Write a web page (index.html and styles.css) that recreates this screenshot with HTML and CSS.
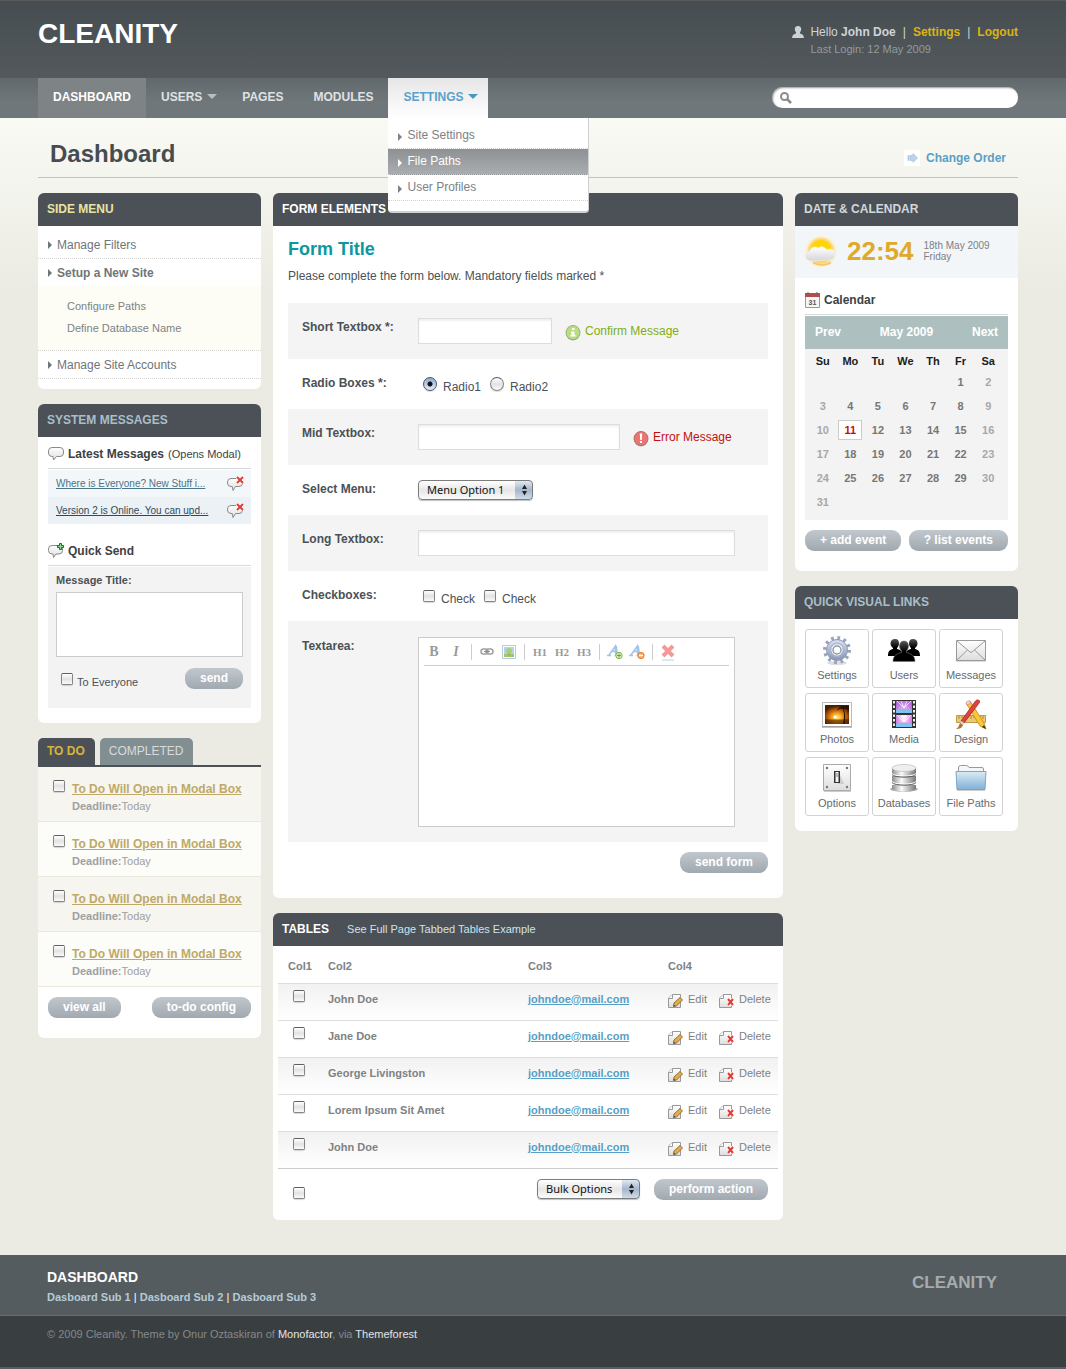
FILE: index.html
```html
<!DOCTYPE html>
<html lang="en">
<head>
<meta charset="utf-8">
<title>Cleanity - Dashboard</title>
<meta name="viewport" content="width=device-width, initial-scale=1">
<link rel="stylesheet" href="styles.css">
</head>
<body>

<svg class="sprite" width="0" height="0" aria-hidden="true">
  <defs>
    <linearGradient id="g-paper" x1="0" y1="0" x2="0" y2="1"><stop offset="0" stop-color="#fff"/><stop offset="1" stop-color="#ddd"/></linearGradient>
    <linearGradient id="g-folder" x1="0" y1="0" x2="0" y2="1"><stop offset="0" stop-color="#dcebf5"/><stop offset="1" stop-color="#7fb0d6"/></linearGradient>
    <linearGradient id="g-gear" x1="0" y1="0" x2="0" y2="1"><stop offset="0" stop-color="#d3daea"/><stop offset="1" stop-color="#8f9cba"/></linearGradient>
    <linearGradient id="g-metal" x1="0" y1="0" x2="1" y2="0"><stop offset="0" stop-color="#8d8d8d"/><stop offset=".4" stop-color="#fafafa"/><stop offset="1" stop-color="#777"/></linearGradient>
    <linearGradient id="g-people" x1="0" y1="0" x2="0" y2="1"><stop offset="0" stop-color="#555"/><stop offset=".5" stop-color="#000"/></linearGradient>
    <linearGradient id="g-cloud" x1="0" y1="0" x2="0" y2="1"><stop offset="0" stop-color="#fff"/><stop offset="1" stop-color="#d6d6da"/></linearGradient>
    <radialGradient id="g-sunset" cx=".5" cy=".65" r=".6"><stop offset="0" stop-color="#fff3a0"/><stop offset=".3" stop-color="#ffae22"/><stop offset=".75" stop-color="#a34c05"/><stop offset="1" stop-color="#4a2000"/></radialGradient>
    <radialGradient id="g-sun"><stop offset="0" stop-color="#ffe000"/><stop offset=".7" stop-color="#fcd63c"/><stop offset="1" stop-color="#f8d98a"/></radialGradient>
    <radialGradient id="g-frame" cx=".5" cy=".6" r=".7"><stop offset="0" stop-color="#fff"/><stop offset=".35" stop-color="#f7b6ee"/><stop offset="1" stop-color="#a660e0"/></radialGradient>
  </defs>
  <symbol id="i-bubble" viewBox="0 0 16 16">
    <path d="M4 1.500h8q3.500 0 3.500 3.500v2q0 3.500-3.500 3.500H8.500L5.500 14l-.5-3.500H4Q.5 10.500.5 7V5Q.5 1.500 4 1.500z" fill="url(#g-paper)" stroke="#8a8a8a"/>
  </symbol>
  <symbol id="i-bubble-delete" viewBox="0 0 17 17">
    <path d="M4 3.500h8q3.500 0 3.500 3.500v1q0 3.500-3.500 3.500H8.500L6 15.500l-.8-4H4Q.5 11.500.5 8V7Q.5 3.500 4 3.500z" fill="url(#g-paper)" stroke="#8a8a8a"/>
    <path d="M10 2l6 6M16 2l-6 6" stroke="#fff" stroke-width="3.500"/><path d="M10 2l6 6M16 2l-6 6" stroke="#e03d35" stroke-width="2"/>
  </symbol>
  <symbol id="i-bubble-add" viewBox="0 0 16 16">
    <path d="M4 2.500h7q3.500 0 3.500 3.500v1.500q0 3.500-3.500 3.500H8L5.500 14.500 5 11H4Q.5 11 .5 7.500V6q0-3.500 3.500-3.500z" fill="url(#g-paper)" stroke="#8a8a8a"/>
    <path d="M11.500.5h2v2h2v2h-2v2h-2v-2h-2v-2h2z" fill="#7fe08f" stroke="#1d6b30"/>
  </symbol>
  <symbol id="i-edit" viewBox="0 0 16 16">
    <path d="M4.500 1.500h8v13H.5V5z" fill="url(#g-paper)" stroke="#999"/><path d="M.5 5.500h4v-4" fill="#fff" stroke="#999"/>
    <path d="M5.500 13.500l.5-3.500 6-5.500 2.500 2.500-6 6z" fill="#e5ab4a" stroke="#7a5a20" stroke-width=".8"/><path d="M5.500 13.500l.3-2 2 1.800z" fill="#555"/>
  </symbol>
  <symbol id="i-delete" viewBox="0 0 16 16">
    <path d="M4.500 1.500h8v13H.5V5z" fill="url(#g-paper)" stroke="#999"/><path d="M.5 5.500h4v-4" fill="#fff" stroke="#999"/>
    <path d="M9 6l5 6M14 6l-5 6" stroke="#fff" stroke-width="3.500"/><path d="M9 6l5 6M14 6l-5 6" stroke="#e03d35" stroke-width="2"/>
  </symbol>
</svg>

<header class="masthead">
  <div class="wrap masthead-row">
    <a class="logo" href="#">CLEANITY</a>
    <div class="account">
      <svg class="account-icon" width="12" height="12" viewBox="0 0 12 12" aria-hidden="true"><path d="M6 0c2.200 0 3.400 1.400 3.200 3.300-.1 1.500-.7 2.500-1.200 3v1.300C10 8.300 11.700 9 12 12H0c.3-3 2-3.700 4-4.400V6.300c-.5-.5-1.100-1.500-1.200-3C2.600 1.400 3.800 0 6 0z" fill="#ced2d4"/></svg>
      <div>
        <p class="account-line">Hello <b>John Doe</b><span class="bar">|</span><a href="#">Settings</a><span class="bar">|</span><a href="#">Logout</a></p>
        <p class="account-login">Last Login: 12 May 2009</p>
      </div>
    </div>
  </div>
</header>

<div class="navbar">
  <div class="wrap navbar-row">
    <nav>
      <ul class="nav">
        <li><a class="nav-link current" href="#">DASHBOARD</a></li>
        <li><a class="nav-link has-menu" href="#">USERS</a></li>
        <li><a class="nav-link" href="#">PAGES</a></li>
        <li><a class="nav-link" href="#">MODULES</a></li>
        <li class="nav-open">
          <a class="nav-link has-menu open" href="#">SETTINGS</a>
          <ul class="dropdown">
            <li><a href="#">Site Settings</a></li>
            <li><a class="hover" href="#">File Paths</a></li>
            <li><a href="#">User Profiles</a></li>
          </ul>
        </li>
      </ul>
    </nav>
    <form class="search" action="#">
      <svg width="12" height="12" viewBox="0 0 12 12" aria-hidden="true"><circle cx="4.500" cy="4.500" r="3.500" fill="none" stroke="#8b8b8b" stroke-width="2"/><path d="M7 7l4 4" stroke="#8b8b8b" stroke-width="2.500"/></svg>
      <input type="text" aria-label="Search">
    </form>
  </div>
</div>

<main class="wrap">
  <div class="page-title">
    <h1>Dashboard</h1>
    <a class="change-order" href="#">
      <svg width="16" height="16" viewBox="0 0 16 16" aria-hidden="true"><path fill="#fff" d="M0 0h16v16H0z"/><path d="M4 5.500h1v5H4zM6 5.500h3V3.500l4.500 4.500L9 12.500v-2H6z" fill="#bcd3ea" stroke="#9dbbd8" stroke-width=".6"/></svg>
      Change Order
    </a>
  </div>

  <div class="columns">
    <div class="column">
      <section class="panel">
        <h2 class="panel-head cream">SIDE MENU</h2>
        <ul class="side-menu">
          <li><a class="side-link" href="#">Manage Filters</a></li>
          <li>
            <a class="side-link active" href="#">Setup a New Site</a>
            <ul class="side-sub">
              <li><a href="#">Configure Paths</a></li>
              <li><a href="#">Define Database Name</a></li>
            </ul>
          </li>
          <li><a class="side-link" href="#">Manage Site Accounts</a></li>
        </ul>
      </section>

      <section class="panel">
        <h2 class="panel-head blue">SYSTEM MESSAGES</h2>
        <div class="messages">
          <h3 class="section-title"><svg width="16" height="16" aria-hidden="true"><use href="#i-bubble"/></svg>Latest Messages <small>(Opens Modal)</small></h3>
          <ul class="message-list">
            <li><a href="#">Where is Everyone? New Stuff i...</a><button class="icon-button" aria-label="Delete message"><svg width="17" height="17"><use href="#i-bubble-delete"/></svg></button></li>
            <li><a href="#">Version 2 is Online. You can upd...</a><button class="icon-button" aria-label="Delete message"><svg width="17" height="17"><use href="#i-bubble-delete"/></svg></button></li>
          </ul>
          <h3 class="section-title"><svg width="16" height="16" aria-hidden="true"><use href="#i-bubble-add"/></svg>Quick Send</h3>
          <form class="quick-send" action="#">
            <label class="quick-label" for="message">Message Title:</label>
            <textarea id="message"></textarea>
            <div class="quick-foot">
              <label class="everyone"><input type="checkbox"> To Everyone</label>
              <button class="btn" type="button">send</button>
            </div>
          </form>
        </div>
      </section>

      <section class="todo">
        <div class="tabs">
          <button class="tab tab-on">TO DO</button>
          <button class="tab">COMPLETED</button>
        </div>
        <div class="todo-body">
          <ul class="todo-list">
            <li><input type="checkbox" aria-label="Done"><div><a href="#">To Do Will Open in Modal Box</a><p><b>Deadline:</b>Today</p></div></li>
            <li><input type="checkbox" aria-label="Done"><div><a href="#">To Do Will Open in Modal Box</a><p><b>Deadline:</b>Today</p></div></li>
            <li><input type="checkbox" aria-label="Done"><div><a href="#">To Do Will Open in Modal Box</a><p><b>Deadline:</b>Today</p></div></li>
            <li><input type="checkbox" aria-label="Done"><div><a href="#">To Do Will Open in Modal Box</a><p><b>Deadline:</b>Today</p></div></li>
          </ul>
          <div class="todo-actions">
            <button class="btn">view all</button>
            <button class="btn">to-do config</button>
          </div>
        </div>
      </section>
    </div>

    <div class="column">
      <section class="panel">
        <h2 class="panel-head">FORM ELEMENTS</h2>
        <form class="demo-form" action="#">
          <h3>Form Title</h3>
          <p class="intro">Please complete the form below. Mandatory fields marked *</p>
          <div class="field shaded">
            <label class="field-label" for="short">Short Textbox *:</label>
            <div class="field-control">
              <input class="text short" id="short" type="text">
              <span class="note ok">
                <svg width="16" height="16" viewBox="0 0 16 16" aria-hidden="true"><circle cx="8" cy="8.500" r="7" fill="#aaa"/><circle cx="8" cy="7.500" r="7" fill="#bcdc84" stroke="#9ab56c"/><path d="M7 3h2.500v2H7zM6 6.500h3.500V10h1v1.500h-5V10h1V8H6z" fill="#fff"/></svg>
                Confirm Message</span>
            </div>
          </div>
          <div class="field" role="group" aria-labelledby="radio-label">
            <span class="field-label" id="radio-label">Radio Boxes *:</span>
            <div class="field-control">
              <label class="option"><input type="radio" name="radio" checked>Radio1</label>
              <label class="option"><input type="radio" name="radio">Radio2</label>
            </div>
          </div>
          <div class="field shaded">
            <label class="field-label" for="mid">Mid Textbox:</label>
            <div class="field-control">
              <input class="text mid" id="mid" type="text">
              <span class="note error">
                <svg width="16" height="16" viewBox="0 0 16 16" aria-hidden="true"><circle cx="8" cy="8.500" r="7" fill="#aaa"/><circle cx="8" cy="7.500" r="7" fill="#e97672" stroke="#b96c68"/><path d="M6.800 2.500h2.400L8.800 9H7.200zM7 10h2v2H7z" fill="#fff"/></svg>
                Error Message</span>
            </div>
          </div>
          <div class="field">
            <label class="field-label" for="menu">Select Menu:</label>
            <div class="field-control">
              <span class="select menu"><select id="menu"><option>Menu Option 1</option></select><svg width="17" height="20" viewBox="0 0 17 20" aria-hidden="true"><path d="M8.500 4.500L11 9H6zM8.500 15.500L11 11H6z" fill="#222"/></svg></span>
            </div>
          </div>
          <div class="field shaded">
            <label class="field-label" for="long">Long Textbox:</label>
            <div class="field-control"><input class="text long" id="long" type="text"></div>
          </div>
          <div class="field" role="group" aria-labelledby="check-label">
            <span class="field-label" id="check-label">Checkboxes:</span>
            <div class="field-control">
              <label class="option"><input type="checkbox">Check</label>
              <label class="option"><input type="checkbox">Check</label>
            </div>
          </div>
          <div class="field field-editor shaded">
            <label class="field-label" for="rich">Textarea:</label>
            <div class="editor">
              <div class="toolbar">
                <button class="tool tool-bold" type="button">B</button>
                <button class="tool tool-italic" type="button">I</button>
                <span class="tool-sep"></span>
                <button class="tool" type="button" aria-label="Link"><svg width="14" height="8" viewBox="0 0 14 8"><rect x="1" y="1" width="7" height="5" rx="2.500" fill="none" stroke="#a0a0a0" stroke-width="1.500"/><rect x="6" y="1" width="7" height="5" rx="2.500" fill="none" stroke="#a0a0a0" stroke-width="1.500"/><path d="M4 3.500h6" stroke="#888"/></svg></button>
                <button class="tool" type="button" aria-label="Image"><svg width="14" height="14" viewBox="0 0 14 14"><path d="M.5.500h13v13H.5z" fill="#fff" stroke="#b5cbe3"/><path d="M2 2h10v10H2z" fill="#b0d3ee"/><path d="M2 9h10v3H2z" fill="#a5c56c"/><circle cx="7" cy="6" r="3" fill="#a6d07c"/><path d="M6.500 8h1v3h-1z" fill="#b39a60"/></svg></button>
                <span class="tool-sep"></span>
                <button class="tool tool-head" type="button">H1</button>
                <button class="tool tool-head" type="button">H2</button>
                <button class="tool tool-head" type="button">H3</button>
                <span class="tool-sep"></span>
                <button class="tool" type="button" aria-label="Larger text"><svg width="16" height="16" viewBox="0 0 16 16"><path d="M2 11L8.500 2 10 11M4.500 7.500h5M0 11.500h4M7.500 11.500H12" fill="none" stroke="#a3c4ea" stroke-width="1.500"/><path d="M8.500 2l1.200 9" stroke="#a3c4ea" stroke-width="3"/><circle cx="12" cy="11.500" r="3.200" fill="#dcefc8" stroke="#7fb552"/><path d="M12 9.500v4M10 11.500h4" stroke="#67a538"/></svg></button>
                <button class="tool" type="button" aria-label="Smaller text"><svg width="16" height="16" viewBox="0 0 16 16"><path d="M2 11L8.500 2 10 11M4.500 7.500h5M0 11.500h4M7.500 11.500H12" fill="none" stroke="#a3c4ea" stroke-width="1.500"/><path d="M8.500 2l1.200 9" stroke="#a3c4ea" stroke-width="3"/><circle cx="12" cy="11.500" r="3.200" fill="#f7a45e" stroke="#e8863c"/><path d="M10 11.500h4" stroke="#fff" stroke-width="1.500"/></svg></button>
                <span class="tool-sep"></span>
                <button class="tool" type="button" aria-label="Clear"><svg width="14" height="18" viewBox="0 0 14 18"><path d="M2 3l10 10M12 3L2 13" stroke="#f4999a" stroke-width="4"/><path d="M1 17h12" stroke="#b3d0ea"/></svg></button>
              </div>
              <textarea id="rich"></textarea>
            </div>
          </div>
          <div class="form-actions"><button class="btn" type="button">send form</button></div>
        </form>
      </section>

      <section class="panel">
        <h2 class="panel-head">TABLES <a href="#">See Full Page Tabbed Tables Example</a></h2>
        <div class="table-area">
          <table class="people">
            <thead><tr><th class="c1">Col1</th><th class="c2">Col2</th><th class="c3">Col3</th><th class="c4">Col4</th></tr></thead>
            <tbody>
              <tr><td><input type="checkbox" aria-label="Select John Doe"></td><td>John Doe</td><td><a class="mail" href="#">johndoe@mail.com</a></td><td class="acts"><div><a href="#"><svg width="16" height="16"><use href="#i-edit"/></svg>Edit</a><a href="#"><svg width="16" height="16"><use href="#i-delete"/></svg>Delete</a></div></td></tr>
              <tr><td><input type="checkbox" aria-label="Select Jane Doe"></td><td>Jane Doe</td><td><a class="mail" href="#">johndoe@mail.com</a></td><td class="acts"><div><a href="#"><svg width="16" height="16"><use href="#i-edit"/></svg>Edit</a><a href="#"><svg width="16" height="16"><use href="#i-delete"/></svg>Delete</a></div></td></tr>
              <tr><td><input type="checkbox" aria-label="Select George Livingston"></td><td>George Livingston</td><td><a class="mail" href="#">johndoe@mail.com</a></td><td class="acts"><div><a href="#"><svg width="16" height="16"><use href="#i-edit"/></svg>Edit</a><a href="#"><svg width="16" height="16"><use href="#i-delete"/></svg>Delete</a></div></td></tr>
              <tr><td><input type="checkbox" aria-label="Select Lorem Ipsum Sit Amet"></td><td>Lorem Ipsum Sit Amet</td><td><a class="mail" href="#">johndoe@mail.com</a></td><td class="acts"><div><a href="#"><svg width="16" height="16"><use href="#i-edit"/></svg>Edit</a><a href="#"><svg width="16" height="16"><use href="#i-delete"/></svg>Delete</a></div></td></tr>
              <tr><td><input type="checkbox" aria-label="Select John Doe"></td><td>John Doe</td><td><a class="mail" href="#">johndoe@mail.com</a></td><td class="acts"><div><a href="#"><svg width="16" height="16"><use href="#i-edit"/></svg>Edit</a><a href="#"><svg width="16" height="16"><use href="#i-delete"/></svg>Delete</a></div></td></tr>
            </tbody>
          </table>
          <div class="bulk">
            <input type="checkbox" aria-label="Select all">
            <span class="select bulk-select"><select aria-label="Bulk options"><option>Bulk Options</option></select><svg width="17" height="20" viewBox="0 0 17 20" aria-hidden="true"><path d="M8.500 4.500L11 9H6zM8.500 15.500L11 11H6z" fill="#222"/></svg></span>
            <button class="btn">perform action</button>
          </div>
        </div>
      </section>
    </div>

    <div class="column">
      <section class="panel">
        <h2 class="panel-head grey">DATE &amp; CALENDAR</h2>
        <div class="clock">
          <svg width="34" height="34" viewBox="0 0 34 34" aria-hidden="true">
            <circle cx="16" cy="16.500" r="15.500" fill="#fdf0c4"/><circle cx="16" cy="16" r="13" fill="url(#g-sun)" stroke="#f8dc9a"/>
            <path d="M6 14a10 9 0 0 1 20 0z" fill="#ffd400"/>
            <path d="M6 26a5 5 0 0 1-1-10 5 5 0 0 1 8-3 6 6 0 0 1 9 2 5 5 0 0 1 8 4q0 6-5 6z" fill="url(#g-cloud)" stroke="#eee" stroke-width=".7"/>
            <path d="M8 27.500q9 5 18 0" fill="none" stroke="#f3c46a" stroke-width="1.500"/>
          </svg>
          <strong>22:54</strong>
          <p>18th May 2009<br>Friday</p>
        </div>
        <div class="calendar">
          <h3 class="section-title">
            <svg width="15" height="16" viewBox="0 0 15 16" aria-hidden="true"><path d="M.5 1.500h14v14H.5z" fill="#f6f6f6" stroke="#999"/><path d="M0 1h15v4H0z" fill="#b34c4c"/><path d="M3 0v3M12 0v3" stroke="#666"/><text x="7.500" y="13" font-family="Liberation Sans, Arial, sans-serif" font-size="7" font-weight="bold" text-anchor="middle" fill="#555">31</text></svg>Calendar</h3>
          <div class="month"><a href="#">Prev</a><span>May 2009</span><a href="#">Next</a></div>
          <div class="days">
            <table>
              <thead><tr><th>Su</th><th>Mo</th><th>Tu</th><th>We</th><th>Th</th><th>Fr</th><th>Sa</th></tr></thead>
              <tbody>
                <tr><td></td><td></td><td></td><td></td><td></td><td>1</td><td>2</td></tr>
                <tr><td>3</td><td>4</td><td>5</td><td>6</td><td>7</td><td>8</td><td>9</td></tr>
                <tr><td>10</td><td><span class="today">11</span></td><td>12</td><td>13</td><td>14</td><td>15</td><td>16</td></tr>
                <tr><td>17</td><td>18</td><td>19</td><td>20</td><td>21</td><td>22</td><td>23</td></tr>
                <tr><td>24</td><td>25</td><td>26</td><td>27</td><td>28</td><td>29</td><td>30</td></tr>
                <tr><td>31</td><td></td><td></td><td></td><td></td><td></td><td></td></tr>
              </tbody>
            </table>
          </div>
          <div class="calendar-actions"><button class="btn">+ add event</button><button class="btn">? list events</button></div>
        </div>
      </section>

      <section class="panel">
        <h2 class="panel-head blue">QUICK VISUAL LINKS</h2>
        <div class="tiles">
          <a class="tile" href="#"><svg width="32" height="32" viewBox="0 0 32 32" aria-hidden="true"><ellipse cx="16" cy="29" rx="10" ry="2" fill="#ddd"/><circle cx="16" cy="16" r="12" fill="none" stroke="#98a4be" stroke-width="4" stroke-dasharray="2.700 3.583"/><circle cx="16" cy="16" r="8" fill="none" stroke="url(#g-gear)" stroke-width="5"/><circle cx="16" cy="16" r="10.500" fill="none" stroke="#8d99b5"/><circle cx="16" cy="16" r="7" fill="none" stroke="#a9b4cb"/><circle cx="16" cy="16" r="4" fill="#fff" stroke="#8f98ad" stroke-width="1.500"/></svg>Settings</a>
          <a class="tile" href="#"><svg width="32" height="32" viewBox="0 0 32 32" aria-hidden="true"><g fill="url(#g-people)"><path d="M7 5c3 0 4 2 4 4.500S9.800 13 9 14v1c3 1 6 1.500 6 7H0c0-5.500 2-6 5-7v-1c-1-1-2.500-2-2.500-4.500S4 5 7 5zM25 5c-3 0-4 2-4 4.500s1.200 3.500 2 4.500v1c-3 1-6 1.500-6 7h15c0-5.500-2-6-5-7v-1c1-1 2.500-2 2.500-4.500S28 5 25 5z"/></g><path d="M16 7c3 0 4.500 2 4.500 5S19 16 18.500 17v1.500c4 1 8.500 2.500 8.500 9H5c0-6.500 4.500-8 8.500-9V17c-.5-1-2-2-2-5s1.500-5 4.500-5z" fill="url(#g-people)" stroke="#777" stroke-width=".6"/></svg>Users</a>
          <a class="tile" href="#"><svg width="32" height="32" viewBox="0 0 32 32" aria-hidden="true"><path d="M1 27h30v1H1z" fill="#ddd"/><path d="M1.500 6.500h29v20h-29z" fill="url(#g-paper)" stroke="#999"/><path d="M2 26l10.500-10M30 26L19.500 16M2 7l13 11q1 .8 2 0L30 7" fill="none" stroke="#999"/></svg>Messages</a>
          <a class="tile" href="#"><svg width="32" height="32" viewBox="0 0 32 32" aria-hidden="true"><path d="M1.500 4.500h29v24h-29z" fill="#fff" stroke="#bbb"/><path d="M1 29h30" stroke="#888"/><path d="M4 7h24v19H4z" fill="url(#g-sunset)"/><path d="M4 21q8 1 24 0v5H4z" fill="#4a2200" opacity=".6"/><path d="M22 26q2-8 0-15-4-1-6 2 1-4 5-4-3-2-5-1 3-1 6 0h6v5q-2-3-5-2 2 7 1 15z" fill="#2b1300"/><circle cx="14" cy="19" r="1.500" fill="#fff"/></svg>Photos</a>
          <a class="tile" href="#"><svg width="32" height="32" viewBox="0 0 32 32" aria-hidden="true"><path d="M4 2h24v28H4z" fill="#333"/><path d="M8 3h16v12H8zM8 17h16v12H8z" fill="url(#g-frame)"/><path d="M8 12q8-3 16 0v3H8zM8 26q8-3 16 0v3H8z" fill="#7fc2f0"/><path d="M16 10L9 3M16 10l-3-7M16 10l3-7M16 10l7-7M16 24l-7-7M16 24l-3-7M16 24l3-7M16 24l7-7" stroke="#fff" stroke-width=".7"/><path d="M6 3v27M26 3v27" stroke="#eee" stroke-width="2" stroke-dasharray="2.500 2"/></svg>Media</a>
          <a class="tile" href="#"><svg width="32" height="32" viewBox="0 0 32 32" aria-hidden="true"><path d="M1.500 17.500h29v7h-29z" fill="#edc873" stroke="#c39a49"/><path d="M4 18v3M7 18v2M10 18v3M13 18v2M16 18v3M19 18v2M22 18v3M25 18v2M28 18v3" stroke="#a07a30" stroke-width=".8"/><path d="M11 5l4-2 14 22 2 6-6-3z" fill="#fbc638" stroke="#c08a1c" stroke-width=".8"/><path d="M29 27l2 4-4-2z" fill="#333"/><path d="M11 5q1-3 4-2l1 2-4 2z" fill="#f4d9d2" stroke="#c66" stroke-width=".5"/><path d="M23 2q2 0 1.500 2.500L9 25l-3-2L20.500 3q1-1.500 2.500-1z" fill="#e0423c" stroke="#9d2320" stroke-width=".7"/><path d="M6.500 23l3 2-1.500 2-3-2z" fill="#d0d0d0"/><path d="M5 25l3 2q-1 4-7 4 3-2 4-6z" fill="#a5763b"/></svg>Design</a>
          <a class="tile" href="#"><svg width="32" height="32" viewBox="0 0 32 32" aria-hidden="true"><path d="M3 29h27v1H3z" fill="#ccc"/><path d="M2.500 2.500h27v26h-27z" fill="url(#g-paper)" stroke="#aaa"/><g fill="#777"><circle cx="6" cy="6" r="1.200"/><circle cx="26" cy="6" r="1.200"/><circle cx="6" cy="25" r="1.200"/><circle cx="26" cy="25" r="1.200"/></g><path d="M19 13l4 9h-6z" fill="#ccc"/><path d="M13 9h6v12h-6z" fill="#333"/><path d="M14.500 10h3v10h-3z" fill="#f5f5f5"/><path d="M15 11h2v4h-2z" fill="#bbb"/></svg>Options</a>
          <a class="tile" href="#"><svg width="32" height="32" viewBox="0 0 32 32" aria-hidden="true"><ellipse cx="16" cy="27" rx="14" ry="3" fill="#bbb"/><path d="M4 23v4c2 3.500 22 3.500 24 0v-4zM4 14v5c2 3.500 22 3.500 24 0v-5zM4 6v5c2 3.500 22 3.500 24 0V6z" fill="url(#g-metal)"/><path d="M4 20.500c2 3.500 22 3.500 24 0M4 12.500c2 3.500 22 3.500 24 0" fill="none" stroke="#555"/><ellipse cx="16" cy="6" rx="12" ry="3.500" fill="#eee" stroke="#bbb" stroke-width=".7"/></svg>Databases</a>
          <a class="tile" href="#"><svg width="32" height="32" viewBox="0 0 32 32" aria-hidden="true"><path d="M2 28h28v1H2z" fill="#ccc"/><path d="M3.500 11V6q0-2.500 2-2.500h6q1.500 0 2.500 2h13q1.500 0 1.500 1.500v4z" fill="#f4f7f9" stroke="#999"/><path d="M1 9.500h30l-1 18H2z" fill="url(#g-folder)" stroke="#7fa5c4"/></svg>File Paths</a>
        </div>
      </section>
    </div>
  </div>
</main>

<footer class="footer">
  <div class="footer-top">
    <div class="wrap footer-row">
      <div class="footer-nav">
        <h2>DASHBOARD</h2>
        <p class="footer-links"><a href="#">Dasboard Sub 1</a> | <a href="#">Dasboard Sub 2</a> | <a href="#">Dasboard Sub 3</a></p>
      </div>
      <strong class="footer-logo">CLEANITY</strong>
    </div>
  </div>
  <div class="footer-bottom">
    <p class="wrap legal">© 2009 Cleanity. Theme by Onur Oztaskiran of <a href="#">Monofactor</a>, via <a href="#">Themeforest</a></p>
  </div>
</footer>
</body>
</html>
```
FILE: styles.css
```css
* { box-sizing: border-box; }

body {
  margin: 0;
  background: #ebebe3 linear-gradient(#fafaf5, #ebebe3) 0 118px / 100% 170px no-repeat;
  color: #4b5156;
  font: 12px/18px "Liberation Sans", Arial, Helvetica, sans-serif;
}

h1, h2, h3, p, ul { margin: 0; padding: 0; }
ul { list-style: none; }
a { color: inherit; text-decoration: none; }
button, input, select, textarea { font: inherit; margin: 0; }
button { cursor: pointer; }
svg { display: block; flex: none; }
.sprite { position: absolute; }

.wrap { max-width: 990px; margin: 0 auto; padding-right: 10px; }

/* Form controls */
input[type="checkbox"], input[type="radio"] {
  appearance: none;
  flex: none;
  width: 12px;
  height: 12px;
  border: 1px solid #858585;
  border-top-color: #5e5e5e;
  border-radius: 2px;
  background: linear-gradient(#fff, #e2e2e2 50%, #fafafa);
  box-shadow: 0 1px 1px rgba(0, 0, 0, .15);
}
input[type="radio"] { width: 14px; height: 14px; border-radius: 50%; }
input[type="radio"]:checked {
  border-color: #4a5870;
  background: radial-gradient(circle, #111 0 2px, transparent 3px), linear-gradient(#8fa8cc, #e4f0fa);
}
input[type="checkbox"]:checked { background: #7089b0; }

.btn {
  height: 21px;
  padding: 0 15px 1px;
  border: 0;
  border-radius: 9px;
  background: linear-gradient(#c0c7cd, #a1a9b0);
  color: #fff;
  font-weight: bold;
  line-height: 20px;
}

.select { display: inline-grid; height: 20px; }
.select > * { grid-area: 1 / 1; }
.select svg { justify-self: end; pointer-events: none; }
.select select {
  appearance: none;
  width: 100%;
  height: 20px;
  padding: 0 20px 0 8px;
  border: 1px solid #7d7d7d;
  border-radius: 4px;
  background:
    linear-gradient(#dfe9f3, #a5b6c9 50%, #cddcea) right / 17px 100% no-repeat,
    linear-gradient(#fff, #e6e6e6 50%, #fbfbfb);
  box-shadow: 0 1px 1px rgba(0, 0, 0, .25);
  color: #111;
  font: 11px/18px "Noto Sans", "Open Sans", sans-serif;
}
.menu { width: 115px; }
.bulk-select { width: 103px; margin-left: auto; }

/* Header */
.masthead {
  border-top: 1px solid #5a5a5a;
  background: linear-gradient(#464d51, #53595d);
}
.masthead-row { display: flex; justify-content: space-between; height: 77px; }
.logo { padding-top: 17px; color: #fff; font-size: 28px; font-weight: bold; line-height: 32px; }
.account { display: flex; gap: 6px; padding-top: 22px; color: #ced4d9; }
.account-icon { margin-top: 3px; }
.account-line a { color: #d9b316; font-weight: bold; }
.bar { margin: 0 7px; }
.account-login { color: #949a9d; font-size: 11px; line-height: 16px; }

.navbar { background: linear-gradient(#62696c, #6f777a 60%); }
.navbar-row { display: flex; justify-content: space-between; }
.nav { display: flex; }
.nav-link {
  display: flex;
  align-items: center;
  gap: 5px;
  height: 40px;
  padding: 0 15px 3px;
  color: #dfe2e4;
  font-weight: bold;
}
.nav-link.current { background: #7e8386; color: #fff; }
.nav-link.has-menu { padding-right: 10px; }
.nav-link.has-menu::after {
  content: "";
  border: 5px solid transparent;
  border-top-color: #b9bec0;
  border-bottom: 0;
}
.nav-link.open { background: linear-gradient(#e6e6e6, #fff); color: #5aa1ca; }
.nav-link.open::after { border-top-color: #4c96c4; }
.nav-open { position: relative; }
.dropdown {
  position: absolute;
  z-index: 2;
  top: 100%;
  left: 0;
  width: 201px;
  padding: 5px 0 10px;
  border-right: 1px solid #d0d0d0;
  border-bottom: 2px solid #d0d0d0;
  border-radius: 0 0 4px 4px;
  background: #fff;
}
.dropdown a {
  display: flex;
  align-items: center;
  gap: 5px;
  height: 26px;
  padding: 0 10px 2px;
  border-bottom: 1px dotted #d0d0d0;
  color: #7c8285;
}
.dropdown a::before, .side-link::before {
  content: "";
  border: 4px solid transparent;
  border-left-color: currentColor;
  border-right: 0;
}
.dropdown a::before { align-self: flex-end; margin-bottom: 5px; }
.side-link::before { margin-right: 1px; }
.dropdown .hover { background: linear-gradient(#8d9194, #a9adaf); color: #fff; }

.search {
  display: flex;
  align-items: center;
  align-self: flex-start;
  gap: 6px;
  width: 246px;
  height: 21px;
  margin-top: 9px;
  padding: 0 8px;
  border-radius: 10px;
  background: #fff;
  box-shadow: inset 1px 1px 2px rgba(0, 0, 0, .4);
}
.search input { flex: 1; min-width: 0; border: 0; background: none; outline: 0; }

/* Page title */
.page-title {
  display: flex;
  justify-content: space-between;
  align-items: center;
  height: 60px;
  margin-bottom: 15px;
  padding: 12px 12px 0;
  border-bottom: 1px solid #c2c2be;
}
h1 { color: #464c50; font-size: 24px; line-height: 30px; }
.change-order { display: flex; align-items: center; gap: 6px; padding-top: 9px; color: #5a9fc5; font-weight: bold; }

/* Columns and panels */
.columns {
  display: grid;
  grid-template-columns: 223px minmax(0, 1fr) 223px;
  align-items: start;
  gap: 12px;
  padding-bottom: 35px;
}
.column { display: grid; gap: 15px; }
.panel { overflow: hidden; border-radius: 6px; background: #fff; }
.panel-head {
  display: flex;
  align-items: center;
  height: 33px;
  padding: 0 9px 1px;
  background: #4b5157;
  color: #fff;
  font-size: 12px;
}
.panel-head a { margin-left: 18px; color: #cfe2ea; font-size: 11px; font-weight: normal; }
.cream { color: #e9e3a2; }
.blue { color: #a9bec8; }
.grey { color: #d3d8db; }

.section-title {
  display: flex;
  align-items: center;
  gap: 4px;
  height: 29px;
  margin-bottom: 1px;
  border-bottom: 1px solid #d5dada;
  color: #3c4144;
  font-size: 12px;
}
.section-title small { font-size: 11px; font-weight: normal; }

/* Side menu */
.side-menu { padding: 5px 0 10px; }
.side-menu > li { border-bottom: 1px dotted #d5d5d5; }
.side-link { display: flex; align-items: center; gap: 4px; height: 27px; padding-left: 10px; color: #6e7679; }
.active { font-weight: bold; }
.side-sub { height: 64px; padding: 9px 29px; background: #fdfcf5; color: #7e8385; font-size: 11px; line-height: 22px; }

/* Messages */
.messages { padding: 3px 10px 15px; }
.message-list { margin-bottom: 13px; }
.message-list li {
  display: flex;
  justify-content: space-between;
  align-items: center;
  height: 27px;
  padding: 0 7px 0 8px;
  background: #f3f7f9;
  color: #4a7488;
  font-size: 10px;
}
.message-list li + li { background: #ecf1f5; color: #2e4a5c; }
.message-list a, .mail { text-decoration: underline; text-underline-offset: 1px; }
.icon-button { padding: 0; border: 0; background: none; }
.quick-send { padding: 4px 8px 12px; background: #f3f3f3; font-size: 11px; }
.quick-label { display: block; height: 21px; font-weight: bold; }
textarea { display: block; width: 100%; resize: none; border: 1px solid #ccc; background: #fff; }
.quick-send textarea { height: 65px; }
.quick-foot { display: flex; justify-content: space-between; align-items: flex-start; padding-top: 11px; }
.everyone { display: flex; gap: 4px; padding: 5px; }
.quick-foot .btn { font-size: 12px; }

/* To do */
.tabs { display: flex; gap: 5px; border-bottom: 2px solid #4b5157; }
.tab {
  height: 27px;
  padding: 0 10px 2px 9px;
  border: 0;
  border-radius: 5px 5px 0 0;
  background: #828f92;
  color: #d6dcdd;
}
.tab-on { background: #4b5157; color: #d8b43c; font-weight: bold; }
.todo-body { overflow: hidden; padding-bottom: 20px; border-radius: 0 0 6px 6px; background: #fff; }
.todo-list li { display: flex; gap: 7px; height: 55px; padding: 13px 15px; border-bottom: 1px solid #ebe9dc; background: #f6f5ef; }
.todo-list li:nth-child(even) { background: #fcfcf8; }
.todo-list a { color: #bfa969; font-weight: bold; text-decoration: underline; text-underline-offset: 1px; }
.todo-list p { color: #a0a0a0; font-size: 11px; line-height: 17px; }
.todo-actions { display: flex; justify-content: space-between; padding: 10px 10px 0; }

/* Form */
.demo-form { padding: 12px 15px 25px; }
.demo-form h3 { color: #0c989f; font-size: 18px; line-height: 22px; }
.intro { margin: 7px 0 18px; }
.field { display: flex; align-items: flex-start; min-height: 50px; padding: 15px 14px; }
.shaded { background: #f4f4f4; }
.field-editor { padding: 16px 14px 15px; }
.field-label { flex: none; width: 116px; font-weight: bold; }
.field-control { display: flex; align-items: center; flex: 1; min-width: 0; }
.text {
  height: 26px;
  padding: 2px 6px;
  border: 1px solid #ddd;
  background: #fff;
  box-shadow: inset 0 2px 2px #f0f0f0;
}
.short { width: 134px; }
.mid { width: 202px; }
.long { width: 317px; }
.note { display: flex; align-items: center; gap: 4px; margin-left: 13px; }
.note svg { margin-top: 3px; }
.ok { color: #7fae12; }
.error { color: #c40f0f; }
.option { display: flex; align-items: center; height: 20px; padding-top: 6px; font-size: 12px; }
.option input { margin: 0 6px 6px 5px; }
.option + .option { margin-left: 4px; }

.editor { width: 317px; height: 190px; padding: 0 5px; border: 1px solid #ccc; background: #fff; }
.toolbar { display: flex; align-items: center; height: 28px; border-bottom: 1px solid #ccc; }
.tool {
  display: flex;
  align-items: center;
  justify-content: center;
  width: 22px;
  height: 20px;
  padding: 0 2px 0 0;
  border: 0;
  background: none;
  color: #9a9a9a;
  font: bold 14px/20px "Liberation Serif", "Times New Roman", serif;
}
.tool-italic { font-style: italic; }
.tool-head { font-size: 11px; }
.tool-sep { width: 9px; height: 16px; background: linear-gradient(#ccc, #ccc) 3px 0 / 1px 100% no-repeat; }
.editor textarea { height: 155px; border: 0; outline: 0; }
.form-actions { display: flex; justify-content: flex-end; padding-top: 10px; }

/* Table */
.table-area { padding: 0 5px 20px; }
.people { width: 100%; border-collapse: collapse; table-layout: fixed; color: #7e8283; font-size: 11px; }
.people th, .people td { padding: 0 10px; text-align: left; vertical-align: top; font-weight: bold; }
.people th { height: 37px; padding-top: 11px; }
.people td { height: 37px; padding-top: 6px; border-top: 1px solid #ddd; }
.people tbody tr:nth-child(odd) { background: linear-gradient(#f1f1f1, #fff); }
.people tbody tr:last-child td { border-bottom: 1px solid #ccc; }
.c1 { width: 8%; }
.c2 { width: 40%; }
.c3 { width: 28%; }
.c4 { width: 24%; }
.people input { display: block; margin-left: 5px; }
.people .acts { padding-right: 0; font-weight: normal; }
.acts div { display: flex; gap: 12px; }
.acts a { display: flex; gap: 4px; }
.acts svg { margin-top: 3px; }
.mail { color: #569fc6; }
.bulk { display: flex; align-items: center; gap: 14px; padding: 10px 10px 0 15px; }
.bulk input { margin-top: 8px; }

/* Calendar */
.clock { display: flex; align-items: center; gap: 8px; height: 52px; padding: 0 10px; background: #f2f6f8; }
.clock strong { color: #dfaa2c; font-size: 26px; line-height: 28px; padding-bottom: 3px; }
.clock p { color: #7b8184; font-size: 10px; line-height: 11px; padding: 0 0 3px 2px; }
.calendar { padding: 8px 10px 20px; }
.month {
  display: flex;
  justify-content: space-between;
  align-items: center;
  height: 33px;
  padding: 0 10px 2px;
  background: #aebfc0;
  color: #fff;
  font-weight: bold;
}
.days { padding: 4px 6px 6px 4px; background: #f3f3f3; }
.days table { width: 100%; border-collapse: collapse; table-layout: fixed; color: #777; font-size: 11px; }
.days th, .days td { height: 24px; padding: 0; text-align: center; font-weight: bold; }
.days th { height: 17px; color: #1c1c1c; line-height: 17px; }
.days td:first-child, .days td:last-child { color: #a8a8a8; }
.today { display: block; width: 24px; height: 20px; margin: 0 auto; border: 1px solid #ccc; background: #fff; color: #c40f0f; }
.calendar-actions { display: flex; justify-content: space-between; padding-top: 10px; }

/* Quick links */
.tiles { display: grid; grid-template-columns: repeat(3, 64px); gap: 5px 3px; padding: 10px 10px 15px; }
.tile {
  display: flex;
  flex-direction: column;
  align-items: center;
  gap: 2px;
  height: 59px;
  padding-top: 4px;
  border: 1px solid #d3d3d3;
  border-radius: 3px;
  color: #666b6d;
  font-size: 11px;
  line-height: 14px;
}

/* Footer */
.footer-top { border-bottom: 1px solid #62716f; background: #555c60; }
.footer-row { display: flex; justify-content: space-between; align-items: center; height: 60px; padding: 0 31px 3px 9px; }
.footer-nav { padding-top: 8px; }
.footer h2 { color: #fff; font-size: 14px; line-height: 20px; }
.footer-links { color: #fff; font-size: 11px; line-height: 20px; }
.footer-links a { color: #b4cbd6; font-weight: bold; }
.footer-logo { color: #a6abad; font-size: 17px; }
.footer-bottom { border-bottom: 2px solid #5b5e60; background: #393e41; }
.legal { height: 51px; padding: 9px; color: #85898b; font-size: 11px; }
.legal a { color: #e3e5e6; }
```
